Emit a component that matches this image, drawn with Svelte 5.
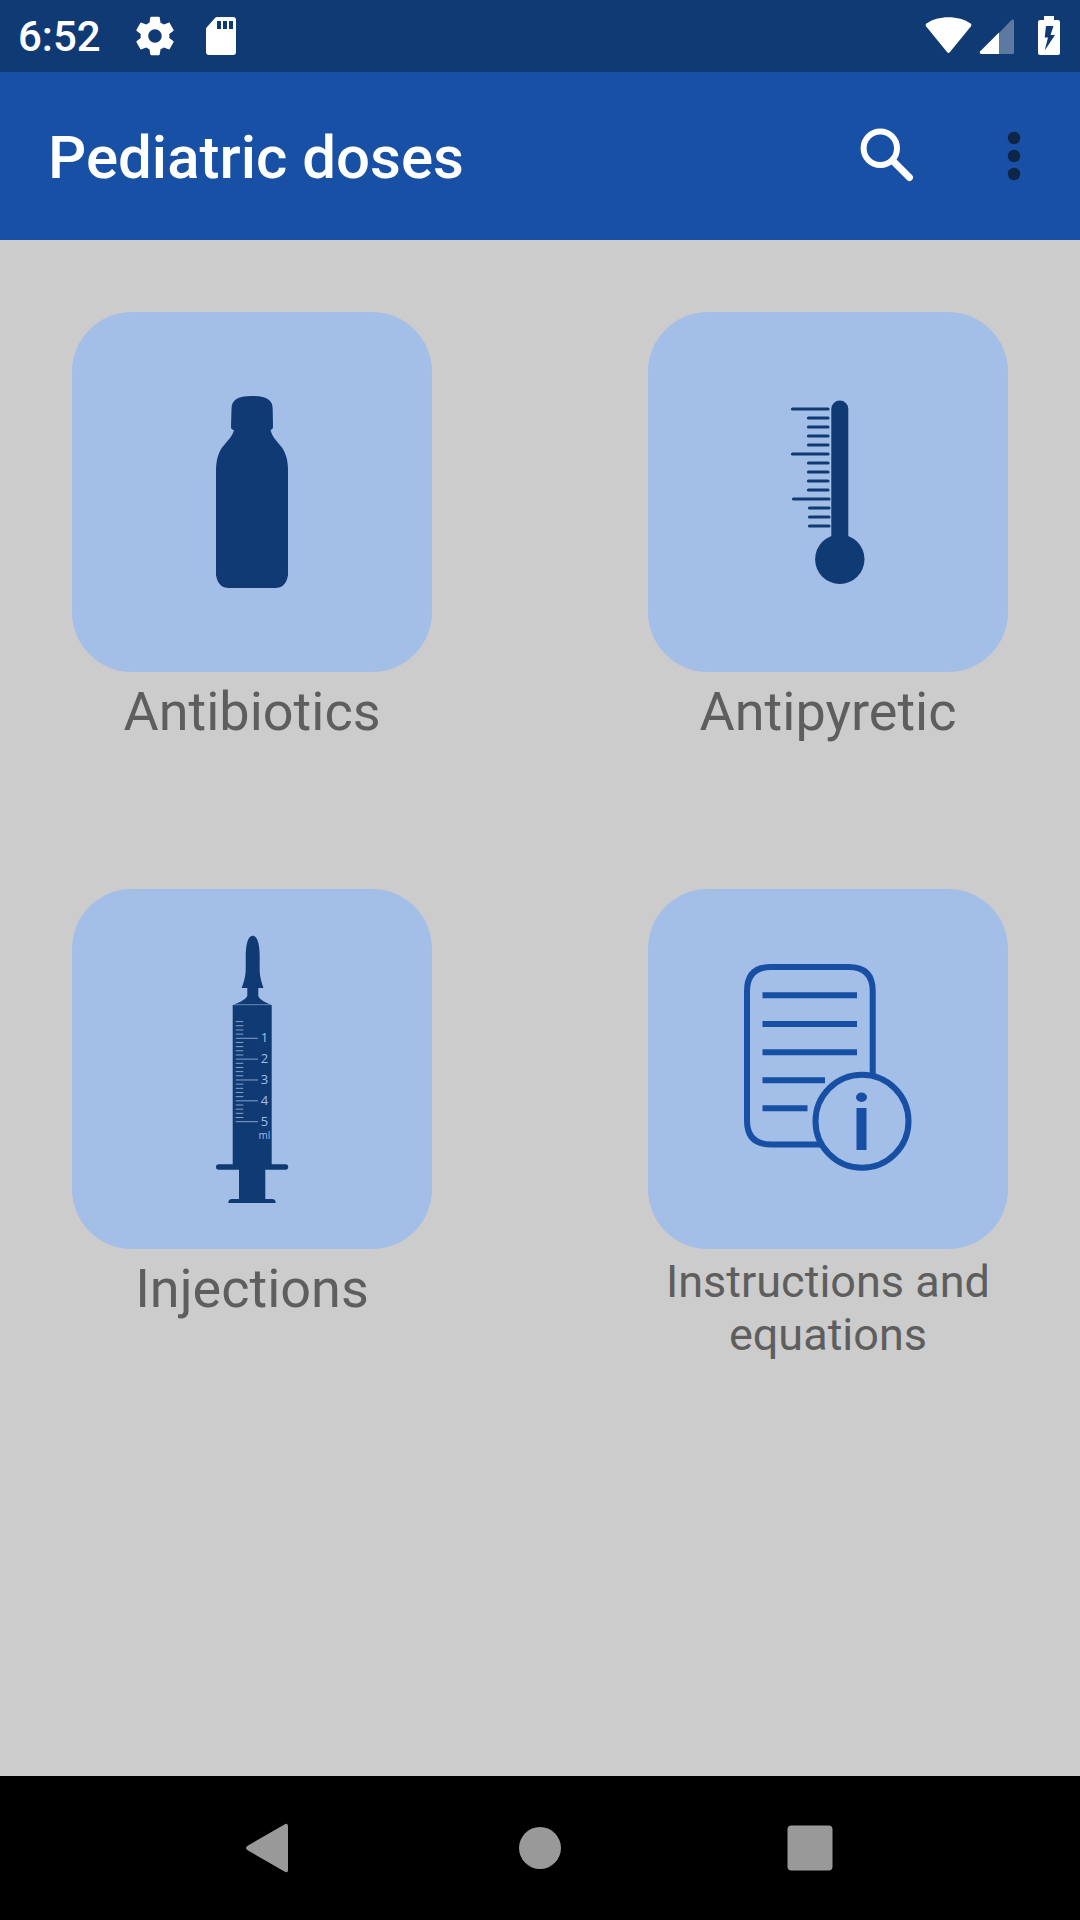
<script>
  const feverTicks = Array.from({ length: 14 }, (_, i) => {
    const shift = i > 9 ? 1 : 0;
    return { y: 97 + i * 9, x1: (i % 5 === 0 ? 144.5 : 160.5) + shift, x2: 180 + shift };
  });
  const barrelTicks = Array.from({ length: 25 }, (_, i) => ({
    y: 132.6 + i * 4.17,
    x2: i % 5 === 4 ? 186 : 171.3
  }));
  const marks = [1, 2, 3, 4, 5];

  const tiles = [
    { id: 'bottle', label: 'Antibiotics' },
    { id: 'thermometer', label: 'Antipyretic' },
    { id: 'syringe', label: 'Injections' },
    { id: 'document', label: 'Instructions and equations', small: true }
  ];
</script>

<div class="screen">
  <div class="status">
    <span class="clock">6:52</span>
    <svg class="gear" viewBox="0 0 24 24" aria-hidden="true">
      <path d="M19.43 12.98c.04-.32.07-.64.07-.98s-.03-.66-.07-.98l2.11-1.65c.19-.15.24-.42.12-.64l-2-3.46c-.12-.22-.39-.3-.61-.22l-2.49 1c-.52-.4-1.08-.73-1.69-.98l-.38-2.65C14.46 2.18 14.25 2 14 2h-4c-.25 0-.46.18-.49.42l-.38 2.65c-.61.25-1.17.59-1.69.98l-2.49-1c-.23-.09-.49 0-.61.22l-2 3.46c-.13.22-.07.49.12.64l2.11 1.65c-.04.32-.07.65-.07.98s.03.66.07.98l-2.11 1.65c-.19.15-.24.42-.12.64l2 3.46c.12.22.39.3.61.22l2.49-1c.52.4 1.08.73 1.69.98l.38 2.65c.03.24.24.42.49.42h4c.25 0 .46-.18.49-.42l.38-2.65c.61-.25 1.17-.59 1.69-.98l2.49 1c.23.09.49 0 .61-.22l2-3.46c.12-.22.07-.49-.12-.64l-2.11-1.65zM12 15.5c-1.93 0-3.5-1.57-3.5-3.5s1.57-3.5 3.5-3.5 3.500 1.570 3.500 3.500-1.570 3.500-3.500 3.500z" />
    </svg>
    <svg class="card" viewBox="0 0 32 38" aria-hidden="true">
      <path fill-rule="evenodd" d="M12 0H28Q31 0 31 3V35Q31 38 28 38H4Q1 38 1 35V12Q1 11 2 10L10 1Q11 0 12 0ZM12 4V12H16V4ZM18 4V12H22V4ZM24 4V12H28V4Z" />
    </svg>
    <span class="spacer"></span>
    <svg class="signals" viewBox="924 14 140 44" aria-hidden="true">
      <path d="M926.300 23.500C938 15 959 15 970.700 23.500Q972 24.800 971 26.300L950 52Q948.500 53.800 947 52L926 26.300Q925 24.800 926.300 23.500Z" />
      <path opacity=".32" d="M1014 21V52.500Q1014 54 1012.500 54H999V33L1011.500 20Q1014 18.500 1014 21Z" />
      <path d="M999 32.500V54H981Q979 53 980 51.500Z" />
      <path fill-rule="evenodd" d="M1044 16H1054V20H1058Q1060 20 1060 22V53Q1060 55 1058 55H1040Q1038 55 1038 53V22Q1038 20 1040 20H1044ZM1046 26L1044.700 37.500H1048L1044.700 50.500L1055 35H1050.500L1053.500 26Z" />
    </svg>
  </div>

  <header>
    <h1>Pediatric doses</h1>
    <button class="tool" aria-label="Search">
      <svg viewBox="0 0 56 56">
        <g fill="none" stroke="#fff">
          <circle cx="21.300" cy="20.300" r="16.700" stroke-width="6" />
          <path d="M34 33L50.500 49.500" stroke-width="7" stroke-linecap="round" />
        </g>
      </svg>
    </button>
    <button class="tool more" aria-label="More options">
      <svg viewBox="0 0 56 56" fill="#0e2548">
        <circle cx="28" cy="10" r="6.200" />
        <circle cx="28" cy="28" r="6.200" />
        <circle cx="28" cy="46" r="6.200" />
      </svg>
    </button>
  </header>

  <main>
    {#each tiles as tile}
      <button class="item">
        <svg class="tile" viewBox="0 0 360 360" aria-hidden="true">
          {#if tile.id === 'bottle'}
            <path d="M159.500 97C159.500 88 165 84 180 84S200.700 88 200.700 97L201 115Q201 117.500 198.500 118C200 124 203 127 207 132C213 138 216 147 216 158V263Q214 276 203 276H157Q146 276 144 263V158C144 147 147 138 153 132C157 127 160.500 124 162 118Q159 117.500 159 115Z" />
          {:else if tile.id === 'thermometer'}
            <path d="M183.300 97A8.500 8.500 0 0 1 200.300 97V230H183.300Z" />
            <circle cx="191.800" cy="247.300" r="24.700" />
            {#each feverTicks as t}
              <line x1={t.x1} x2={t.x2} y1={t.y} y2={t.y} stroke="#103a73" stroke-width="3.200" stroke-linecap="round" />
            {/each}
          {:else if tile.id === 'syringe'}
            <path d="M180.700 46.700C186 46.700 187.700 57 187.700 68C187.700 83 187 86 191.500 99H186.300V107C188 111 193 113 199.700 116V275.300H213.500A2.700 2.700 0 0 1 213.500 280.700H193.300V310H200Q203.700 310 203.700 314H156.300Q156.300 310 160 310H167V280.700H146.700A2.700 2.700 0 0 1 146.700 275.300H160.700V116C168 113 173 111 175.300 107V99H169.700C174.500 86 173.700 83 173.700 68C173.700 57 175.500 46.700 180.700 46.700Z" />
            <path d="M161 115.700H199.500" stroke="#a3bee7" stroke-width=".6" />
            {#each barrelTicks as t}
              <line x1="163.700" x2={t.x2} y1={t.y} y2={t.y} stroke="#a3bee7" stroke-width=".8" />
            {/each}
            {#each marks as n}
              <text class="mark" x="192.500" y={132.5 + n * 20.8}>{n}</text>
            {/each}
            <text class="unit" x="192.500" y="250">ml</text>
          {:else}
            <g fill="none" stroke="#174fa4" stroke-width="6">
              <path d="M224.700 185V102Q224.700 78 200.700 78H123Q99 78 99 102V231.500Q99 255.500 123 255.500H173" />
              <circle cx="214" cy="232.300" r="46.500" />
              <path d="M114.500 106.300H209M114.500 135H209M114.500 163.300H209M114.500 191.300H177M114.500 219.300H159.500" />
            </g>
            <g fill="#174fa4">
              <ellipse cx="213.500" cy="208.300" rx="5.500" ry="4.700" />
              <rect x="208.500" y="219" width="10" height="42" />
            </g>
          {/if}
        </svg>
        <span class="label" class:small={tile.small}>{tile.label}</span>
      </button>
    {/each}
  </main>

  <nav>
    <button aria-label="Back">
      <svg viewBox="0 0 54 54"><path d="M41 3.800Q45 1 45 5.500V48.500Q45 53 41 50.200L5 29.500Q1 27 5 24.500Z" /></svg>
    </button>
    <button aria-label="Home">
      <svg viewBox="0 0 54 54"><circle cx="27" cy="27" r="21" /></svg>
    </button>
    <button aria-label="Recent apps">
      <svg viewBox="0 0 54 54"><rect x="4.500" y="4.500" width="45" height="45" rx="4" /></svg>
    </button>
  </nav>
</div>

<style>
  :global(body) {
    margin: 0;
    background: #ccc;
  }
  .screen {
    display: flex;
    flex-direction: column;
    min-height: 100vh;
    background: #ccc;
    font-family: Roboto, sans-serif;
  }
  button {
    border: 0;
    padding: 0;
    background: none;
    font: inherit;
    color: inherit;
    cursor: pointer;
  }
  svg {
    display: block;
  }
  .status {
    display: flex;
    align-items: center;
    height: 72px;
    padding: 0 16px 0 18px;
    box-sizing: border-box;
    background: #103a73;
    color: #fff;
    fill: #fff;
  }
  .clock {
    padding-top: 2px;
    font-size: 42px;
    line-height: 72px;
    font-weight: 500;
    margin-right: 31px;
  }
  .gear {
    width: 46px;
    height: 46px;
  }
  .card {
    width: 32px;
    height: 38px;
    margin-left: 27px;
  }
  .spacer {
    flex: 1;
  }
  .signals {
    width: 140px;
    height: 44px;
  }
  header {
    display: flex;
    align-items: center;
    height: 168px;
    padding: 0 38px 0 48px;
    box-sizing: border-box;
    background: #1750a4;
  }
  h1 {
    flex: 1;
    margin: 0;
    padding-top: 4px;
    color: #fff;
    font-size: 60px;
    line-height: 72px;
    font-weight: 500;
  }
  .tool svg {
    width: 56px;
    height: 56px;
  }
  .more {
    margin-left: 71px;
  }
  main {
    flex: 1;
    display: grid;
    grid-template-columns: repeat(2, minmax(0, 360px));
    grid-auto-rows: minmax(504px, auto);
    justify-content: space-between;
    align-content: start;
    gap: 73px;
    padding: 72px 72px 0;
  }
  .item {
    display: flex;
    flex-direction: column;
    align-items: center;
  }
  .tile {
    width: 100%;
    aspect-ratio: 1;
    border-radius: 60px;
    background: #a3bee7;
    fill: #103a73;
  }
  .mark,
  .unit {
    fill: #a3bee7;
    font-family: "Open Sans", sans-serif;
    font-size: 13px;
    text-anchor: middle;
  }
  .unit {
    font-size: 10px;
  }
  .label {
    padding-top: 6px;
    color: #5e5e5e;
    font-size: 54px;
    line-height: 68px;
    text-align: center;
  }
  .label.small {
    font-size: 45px;
    line-height: 53px;
  }
  nav {
    display: grid;
    grid-template-columns: repeat(3, 1fr);
    height: 144px;
    padding: 0 12.5%;
    background: #000;
    fill: #999;
  }
  nav button {
    display: flex;
    align-items: center;
    justify-content: center;
  }
  nav svg {
    width: 54px;
    height: 54px;
  }
</style>
